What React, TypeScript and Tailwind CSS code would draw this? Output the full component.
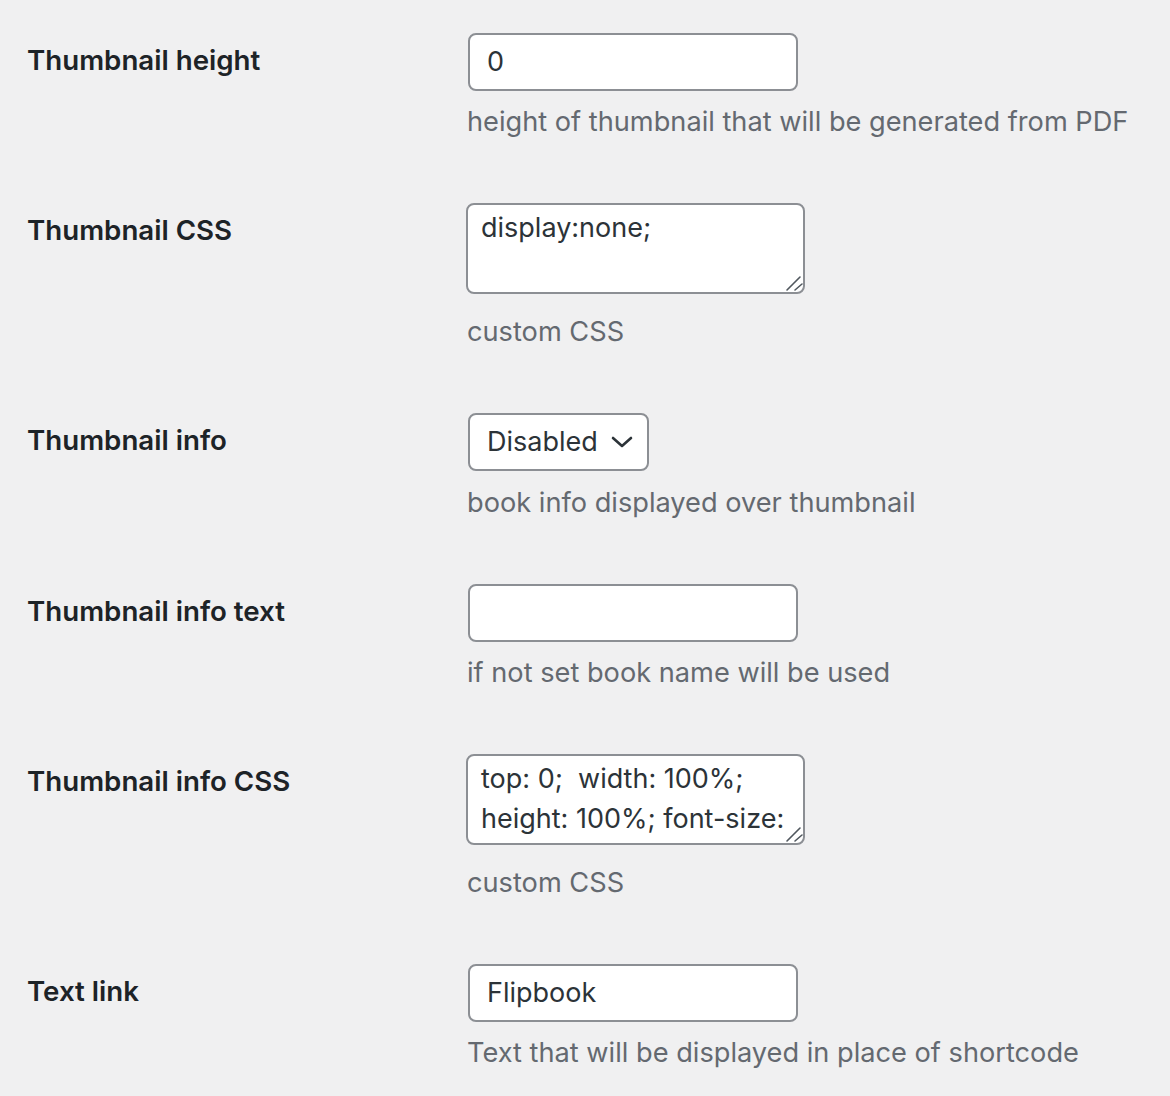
import React from 'react'

const font = { fontFamily: 'Inter, "Noto Sans", sans-serif' }

type Field =
  | { kind: 'input'; value: string }
  | { kind: 'textarea'; value: string }
  | { kind: 'select'; value: string }

interface Row {
  label: string
  field: Field
  help: string
}

const rows: Row[] = [
  { label: 'Thumbnail height', field: { kind: 'input', value: '0' }, help: 'height of thumbnail that will be generated from PDF' },
  { label: 'Thumbnail CSS', field: { kind: 'textarea', value: 'display:none;' }, help: 'custom CSS' },
  { label: 'Thumbnail info', field: { kind: 'select', value: 'Disabled' }, help: 'book info displayed over thumbnail' },
  { label: 'Thumbnail info text', field: { kind: 'input', value: '' }, help: 'if not set book name will be used' },
  {
    label: 'Thumbnail info CSS',
    field: { kind: 'textarea', value: 'top: 0;  width: 100%; height: 100%; font-size: 14px; line-height: 1.2;' },
    help: 'custom CSS',
  },
  { label: 'Text link', field: { kind: 'input', value: 'Flipbook' }, help: 'Text that will be displayed in place of shortcode' },
]

const Control: React.FC<{ field: Field }> = ({ field }) => {
  if (field.kind === 'textarea') {
    return (
      <div className="relative w-[339px] h-[91px] -ml-[2px]">
        <textarea
          readOnly
          defaultValue={field.value}
          style={font}
          className="block w-full h-full bg-white border-2 border-[#8c8f94] rounded-[8px] pl-[13px] pr-[8px] pt-[3px] text-[27px] leading-[40px] text-[#2c3338] overflow-hidden resize-none outline-none"
        />
        {/* resize grip */}
        <svg className="absolute right-0 bottom-0 pointer-events-none" width="20" height="20" viewBox="0 0 20 20">
          <path d="M2 16L15 3M10 16L17 10" stroke="#50575e" strokeWidth="1.6" strokeLinecap="round" />
        </svg>
      </div>
    )
  }
  if (field.kind === 'select') {
    return (
      <div className="flex items-center w-[181px] h-[58px] bg-white border-2 border-[#8c8f94] rounded-[8px] pl-[17px] pr-[14px] justify-between">
        <span className="text-[27px] text-[#2c3338]">{field.value}</span>
        <svg width="22" height="14" viewBox="0 0 22 14" fill="none">
          <path d="M2 3l9 8 9-8" stroke="#2c3338" strokeWidth="2.6" strokeLinecap="round" strokeLinejoin="round" />
        </svg>
      </div>
    )
  }
  return (
    <div className="flex items-center w-[330px] h-[58px] bg-white border-2 border-[#8c8f94] rounded-[8px] pl-[17px]">
      <span className="text-[27px] text-[#2c3338]">{field.value}</span>
    </div>
  )
}

const App: React.FC = () => {
  return (
    <div style={font} className="min-h-[1096px] bg-[#f0f0f1] pt-[3px]">
      {rows.map((row) => (
        <div key={row.label} className="flex pt-[30px] pb-[31px]">
          <div className="w-[468px] shrink-0 pl-[27px] pt-[7px] text-[27.7px] leading-[40px] font-semibold text-[#1d2327]">
            {row.label}
          </div>
          <div>
            <Control field={row.field} />
            <div
              className={
                row.field.kind === 'textarea'
                  ? 'mt-[18px] -ml-[1px] text-[27.2px] leading-[40px] text-[#646970]'
                  : row.field.kind === 'select'
                    ? 'mt-[12px] -ml-[1px] text-[27.2px] leading-[40px] text-[#646970]'
                    : 'mt-[11px] -ml-[1px] text-[27.2px] leading-[40px] text-[#646970]'
              }
            >
              {row.help}
            </div>
          </div>
        </div>
      ))}
    </div>
  )
}

export default App
